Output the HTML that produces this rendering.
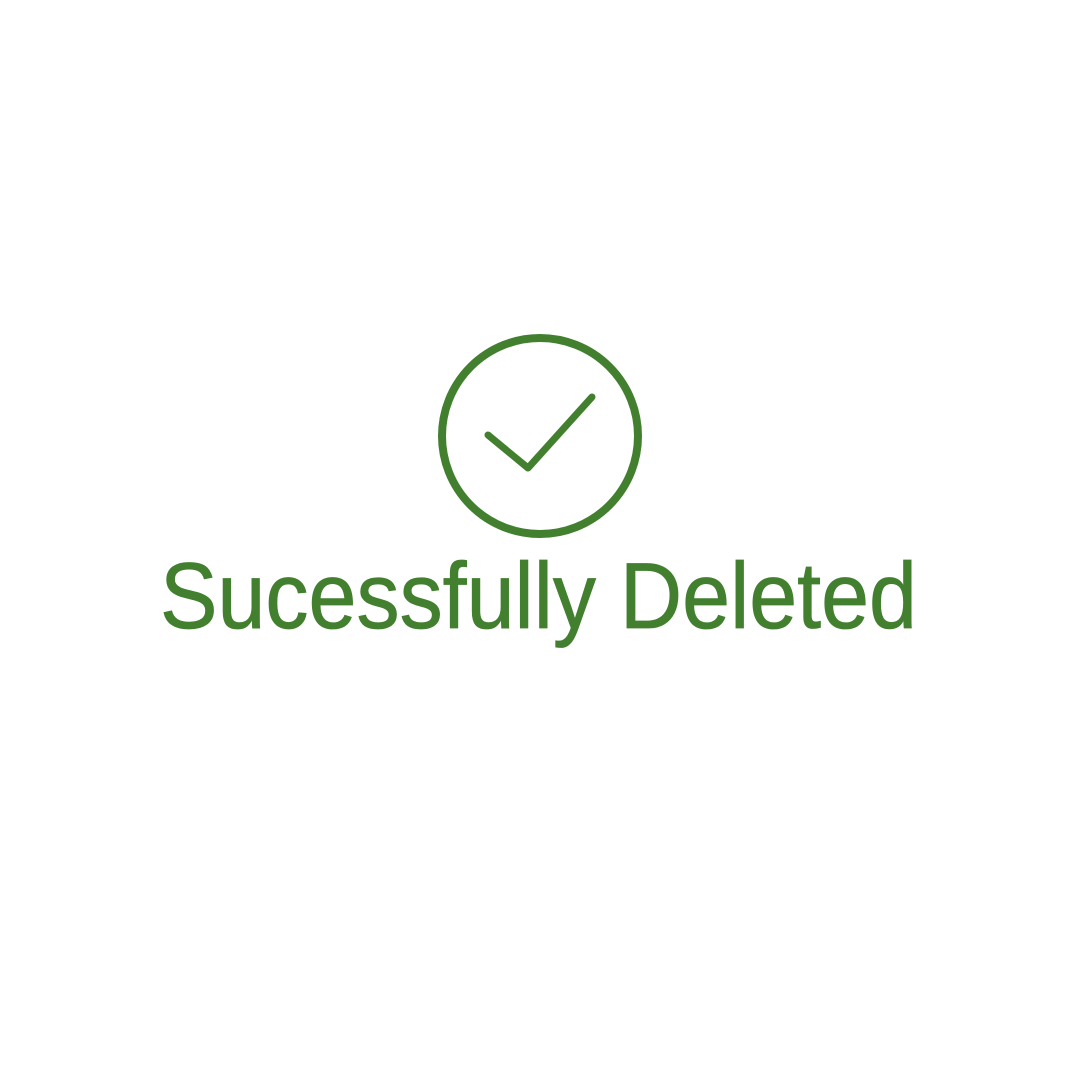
<!DOCTYPE html>
<html><head><style>html,body{margin:0;padding:0;background:#fff;width:1080px;height:1080px;overflow:hidden}</style></head>
<body>
<svg width="1080" height="1080" viewBox="0 0 1080 1080" xmlns="http://www.w3.org/2000/svg">
<circle cx="540" cy="436" r="98" fill="none" stroke="#42802f" stroke-width="8"/>
<polyline points="488,435 528,468 592,397" fill="none" stroke="#42802f" stroke-width="7" stroke-linecap="round" stroke-linejoin="round"/>
<text x="160" y="628" font-family="Liberation Sans, sans-serif" font-size="94" fill="#42802f" stroke="#42802f" stroke-width="0.8" textLength="757" lengthAdjust="spacingAndGlyphs">Sucessfully Deleted</text>
</svg>
</body></html>
